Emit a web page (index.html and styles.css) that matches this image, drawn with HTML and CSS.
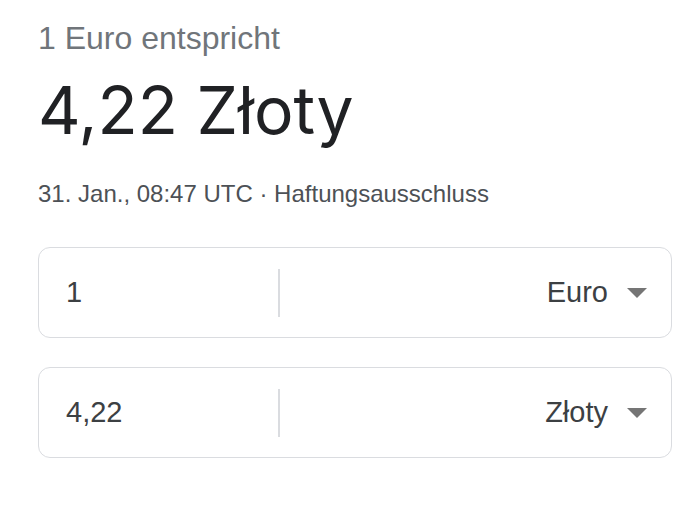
FILE: index.html
```html
<!DOCTYPE html>
<html lang="de">
<head>
<meta charset="utf-8">
<title>Währungsrechner</title>
<link rel="stylesheet" href="styles.css">
</head>
<body>
<div class="converter">
  <div class="subtitle">1 Euro entspricht</div>
  <div class="result">4,22 Złoty</div>
  <div class="meta">31. Jan., 08:47 UTC · <span class="link">Haftungsausschluss</span></div>
  <div class="rows">
    <div class="row">
      <div class="amount">1</div>
      <div class="divider"></div>
      <div class="currency"><span class="cur-name">Euro</span><span class="arrow"></span></div>
    </div>
    <div class="row">
      <div class="amount">4,22</div>
      <div class="divider"></div>
      <div class="currency"><span class="cur-name">Złoty</span><span class="arrow"></span></div>
    </div>
  </div>
</div>
</body>
</html>
```
FILE: styles.css
```css
html, body {
  margin: 0;
  padding: 0;
  background: #ffffff;
}
.converter {
  padding: 20px 26px 0 38px;
  font-family: "Liberation Sans", Arial, sans-serif;
}
.subtitle {
  font-size: 32px;
  line-height: 36px;
  color: #70757a;
}
.result {
  font-family: Inter, Roboto, "Liberation Sans", sans-serif;
  font-size: 66px;
  line-height: 84px;
  color: #202124;
  margin-top: 12px;
}
.meta {
  font-size: 24px;
  line-height: 28px;
  color: #4d5156;
  margin-top: 28px;
}
.rows {
  display: flex;
  flex-direction: column;
  gap: 29px;
  margin-top: 39px;
}
.row {
  display: flex;
  align-items: center;
  height: 89px;
  border: 1px solid #dadce0;
  border-radius: 12px;
}
.amount {
  width: 212px;
  padding-left: 27px;
  font-size: 29px;
  color: #3c4043;
}
.divider {
  width: 2px;
  height: 48px;
  background: #dadce0;
}
.currency {
  flex: 1;
  display: flex;
  align-items: center;
  justify-content: flex-end;
  padding-right: 24px;
  font-size: 29px;
  color: #3c4043;
}
.arrow {
  width: 0;
  height: 0;
  margin-left: 19px;
  border-left: 10px solid transparent;
  border-right: 10px solid transparent;
  border-top: 10px solid #757575;
}
```
